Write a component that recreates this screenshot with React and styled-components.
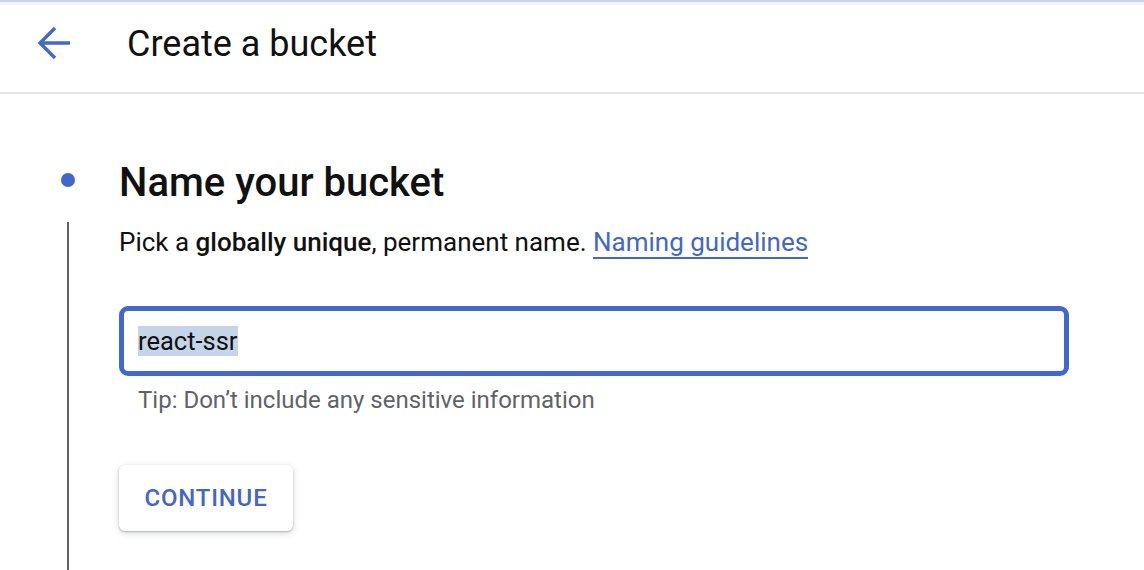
import React from "react";
import styled, { createGlobalStyle } from "styled-components";

const GlobalStyle = createGlobalStyle`
  html, body {
    margin: 0;
    padding: 0;
    background: #ffffff;
    overflow: hidden;
    font-family: Roboto, "Liberation Sans", Arial, sans-serif;
    color: #111111;
  }
  ::selection {
    background: #c6d4e7;
  }
`;

const Page = styled.div`
  min-height: 570px;
  display: flex;
  flex-direction: column;
`;

const TopStrip = styled.div`
  height: 2px;
  background: #cbd5e9;
  border-bottom: 3px solid #f0f2f5;
`;

const Header = styled.header`
  height: 89px;
  display: flex;
  align-items: flex-start;
  border-bottom: 2px solid #e4e4e4;
  padding: 17px 0 0 36px;
  box-sizing: border-box;
`;

const BackButton = styled.button`
  width: 36px;
  height: 36px;
  margin: 3px 55px 0 0;
  padding: 0;
  border: none;
  background: none;
  display: flex;
  align-items: center;
  justify-content: center;
  cursor: pointer;
`;

const Title = styled.h1`
  margin: 0;
  font-size: 36px;
  font-weight: 400;
  color: #111111;
  line-height: 44px;
`;

const Main = styled.main`
  flex: 1;
  padding: 65px 0 0 62px;
`;

const Step = styled.section`
  display: grid;
  grid-template-columns: 12px 950px;
  column-gap: 45px;
`;

const Dot = styled.div`
  width: 14px;
  height: 14px;
  border-radius: 50%;
  background: #3f67d0;
  align-self: center;
  justify-self: center;
  margin-top: -6px;
`;

const Rail = styled.div`
  width: 2px;
  margin: 15px 0 0 5px;
  background: #616161;
`;

const StepTitle = styled.h2`
  margin: 0;
  font-size: 40px;
  font-weight: 500;
  line-height: 48px;
  color: #111111;
`;

const Body = styled.div`
  padding-bottom: 60px;
`;

const Description = styled.p`
  margin: 19px 0 0;
  font-size: 26px;
  line-height: 32px;
  color: #111111;

  strong {
    font-weight: 500;
  }
`;

const GuideLink = styled.a`
  color: #4267c9;
  text-decoration: none;
  border-bottom: 2px solid #4267c9;
  padding-bottom: 0;
`;

const Field = styled.div`
  margin-top: 48px;
  height: 70px;
  box-sizing: border-box;
  border: 5px solid #4267cd;
  border-radius: 9px;
  display: flex;
  align-items: center;
  padding-left: 14px;
`;

const Input = styled.input`
  border: none;
  outline: none;
  width: 100%;
  font-family: inherit;
  font-size: 25.5px;
  color: #111111;
  background: transparent;
  padding: 0;
`;

const Hint = styled.div`
  margin: 10px 0 0 19px;
  font-size: 24px;
  line-height: 28px;
  color: #5f6368;
`;

const ContinueButton = styled.button`
  margin-top: 51px;
  width: 174px;
  height: 66px;
  border: none;
  border-radius: 6px;
  background: #ffffff;
  box-shadow: 0 1px 2px rgba(60, 64, 67, 0.3), 0 2px 6px 1px rgba(60, 64, 67, 0.15);
  color: #4267c9;
  font-family: inherit;
  font-size: 24px;
  font-weight: 500;
  letter-spacing: 0.8px;
  cursor: pointer;
`;

const ArrowIcon = () => (
  <svg width="36" height="36" viewBox="0 0 36 36" fill="none">
    <path
      d="M34 18H4M19 3L4 18l15 15"
      stroke="#4267cd"
      strokeWidth="3.4"
      strokeLinecap="butt"
      strokeLinejoin="miter"
    />
  </svg>
);

export default function App() {
  const inputRef = React.useRef(null);

  React.useEffect(() => {
    if (inputRef.current) {
      inputRef.current.focus();
      inputRef.current.select();
    }
  }, []);

  return (
    <Page>
      <GlobalStyle />
      <TopStrip />
      <Header>
        <BackButton aria-label="Back">
          <ArrowIcon />
        </BackButton>
        <Title>Create a bucket</Title>
      </Header>
      <Main>
        <Step>
          <Dot />
          <StepTitle>Name your bucket</StepTitle>
          <Rail />
          <Body>
            <Description>
              Pick a <strong>globally unique</strong>, permanent name.{" "}
              <GuideLink href="#">Naming guidelines</GuideLink>
            </Description>
            <Field>
              <Input ref={inputRef} defaultValue="react-ssr" />
            </Field>
            <Hint>Tip: Don’t include any sensitive information</Hint>
            <ContinueButton>CONTINUE</ContinueButton>
          </Body>
        </Step>
      </Main>
    </Page>
  );
}
